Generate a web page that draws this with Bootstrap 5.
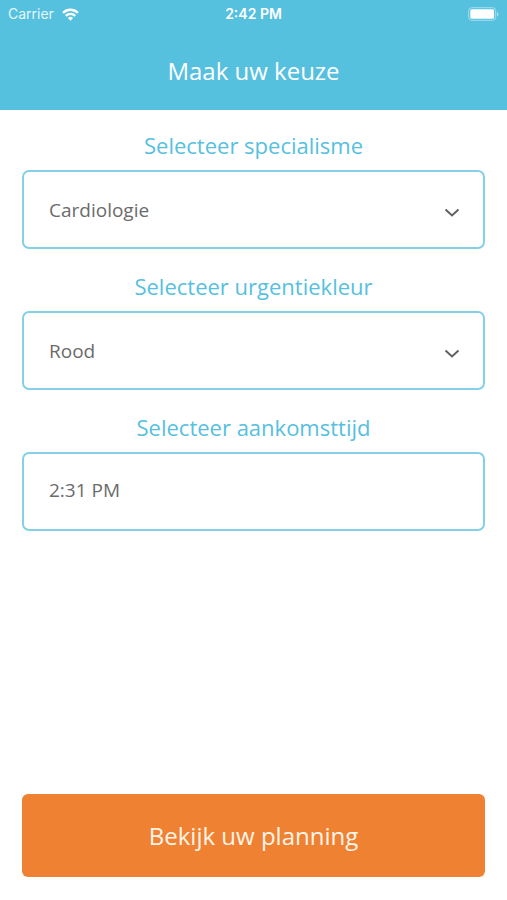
<!DOCTYPE html>
<html lang="nl">
<head>
<meta charset="utf-8">
<meta name="viewport" content="width=device-width, initial-scale=1">
<title>Maak uw keuze</title>
<link href="https://cdn.jsdelivr.net/npm/bootstrap@5.3.0/dist/css/bootstrap.min.css" rel="stylesheet">
<style>
  :root { --sky: #56c0df; --orange: #ef8133; }
  body { font-family: "Open Sans", "Noto Sans", sans-serif; }
  .topbar { background: var(--sky); color: #fff; }
  .status { font-family: Inter, "Liberation Sans", sans-serif; font-size: 14px; line-height: 28px; }
  .status-carrier { color: #e4f8fd; }
  .status svg { display: block; }
  .screen-title { font-size: 24px; line-height: 32px; padding: 27px 0 23px; }
  .choices { padding: 20px 22px 22px; gap: 22px; }
  .choice-label { color: var(--sky); font-size: 22px; line-height: 30px; margin-bottom: 10px; }
  .choice-box, .choice-box:focus {
    height: 79px; padding: 0 25px; border: 2px solid #84d0e6; border-radius: 7px;
    color: #6b6b6b; font-size: 19px; line-height: 28px; background-color: #fff;
  }
  .form-control.choice-box { padding-bottom: 4px; }
  .form-select.choice-box {
    background-image: url("data:image/svg+xml,%3Csvg xmlns='http://www.w3.org/2000/svg' viewBox='0 0 16 16'%3E%3Cpath d='M1.500 5.500l6.500 6 6.500-6' fill='none' stroke='%23606060' stroke-width='2'/%3E%3C/svg%3E");
    background-size: 16px 16px; background-position: right 23px top 32px;
  }
  .btn-plan, .btn-plan:hover { background: var(--orange); color: #fff4e8; height: 83px; border: 0; border-radius: 6px; font-size: 24px; }
  .plan-area { padding: 0 22px 23px; }
</style>
</head>
<body class="bg-white">
<div class="d-flex flex-column min-vh-100">
  <header class="topbar">
    <div class="status row g-0 px-2 align-items-center">
      <div class="col d-flex align-items-center gap-2 status-carrier">
        <span>Carrier</span>
        <svg width="17" height="13" viewBox="0 0 17 13" fill="none" stroke="#fff" stroke-width="2.3" role="img" aria-label="Wifi">
          <path d="M1 4.8a10.8 10.8 0 0 1 15 0M3.8 7.8a6.8 6.8 0 0 1 9.4 0"/>
          <path d="M8.500 12.800L5.900 10.100a3.700 3.700 0 0 1 5.200 0z" fill="#fff" stroke="none"/>
        </svg>
      </div>
      <div class="col-auto fw-semibold">2:42 PM</div>
      <div class="col d-flex justify-content-end">
        <svg width="31" height="14" viewBox="0 0 31 14" role="img" aria-label="Batterij">
          <rect x=".7" y=".7" width="27" height="12.600" rx="3" fill="none" stroke="#a5deef"/>
          <rect x="2.300" y="2.300" width="23.800" height="9.400" rx="1.500" fill="#fff"/>
          <path d="M29 5v4.500q1.600-.7 1.600-2.250T29 5z" fill="#a5deef"/>
        </svg>
      </div>
    </div>
    <h1 class="screen-title text-center fw-normal m-0">Maak uw keuze</h1>
  </header>
  <main class="flex-grow-1 d-flex flex-column">
    <form class="flex-grow-1 d-flex flex-column">
      <div class="choices d-flex flex-column">
        <div>
          <label class="choice-label d-block text-center" for="specialisme">Selecteer specialisme</label>
          <select class="form-select choice-box" id="specialisme"><option>Cardiologie</option></select>
        </div>
        <div>
          <label class="choice-label d-block text-center" for="urgentie">Selecteer urgentiekleur</label>
          <select class="form-select choice-box" id="urgentie"><option>Rood</option></select>
        </div>
        <div>
          <label class="choice-label d-block text-center" for="aankomst">Selecteer aankomsttijd</label>
          <input class="form-control choice-box" id="aankomst" type="text" value="2:31 PM">
        </div>
      </div>
      <div class="plan-area mt-auto">
        <button class="btn btn-plan w-100" type="button">Bekijk uw planning</button>
      </div>
    </form>
  </main>
</div>
<script src="https://cdn.jsdelivr.net/npm/bootstrap@5.3.0/dist/js/bootstrap.bundle.min.js"></script>
</body>
</html>
